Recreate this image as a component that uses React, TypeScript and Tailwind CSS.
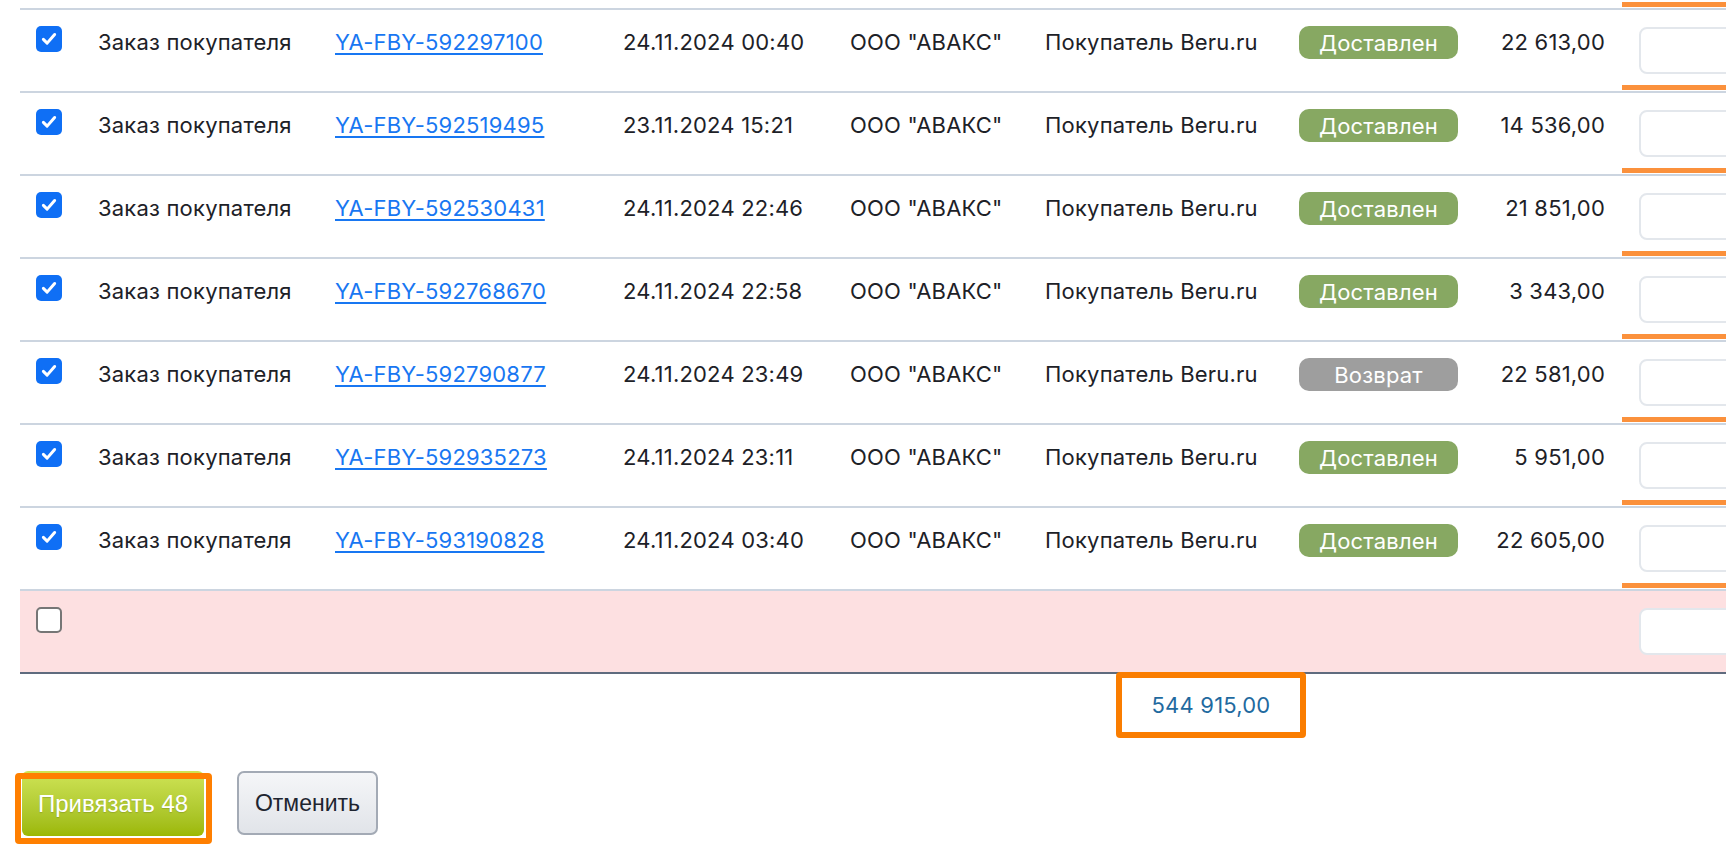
const rows = [
  { num: "YA-FBY-592297100", date: "24.11.2024 00:40", status: "Доставлен", sum: "22 613,00" },
  { num: "YA-FBY-592519495", date: "23.11.2024 15:21", status: "Доставлен", sum: "14 536,00" },
  { num: "YA-FBY-592530431", date: "24.11.2024 22:46", status: "Доставлен", sum: "21 851,00" },
  { num: "YA-FBY-592768670", date: "24.11.2024 22:58", status: "Доставлен", sum: "3 343,00" },
  { num: "YA-FBY-592790877", date: "24.11.2024 23:49", status: "Возврат", sum: "22 581,00" },
  { num: "YA-FBY-592935273", date: "24.11.2024 23:11", status: "Доставлен", sum: "5 951,00" },
  { num: "YA-FBY-593190828", date: "24.11.2024 03:40", status: "Доставлен", sum: "22 605,00" },
];

const grid = "grid grid-cols-[78px_237px_288px_227px_195px_254px_171px_152px_1fr]";

function Checkbox({ checked }: { checked: boolean }) {
  if (!checked) {
    return <div className="w-[26px] h-[26px] rounded-[5px] border-2 border-[#767676] bg-white" />;
  }
  return (
    <div className="w-[26px] h-[26px] rounded-[5px] bg-[#0f6ff5] flex items-center justify-center">
      <svg width="18" height="18" viewBox="0 0 24 24" fill="none">
        <path d="M4.5 12.5l5 5L19.5 6" stroke="white" strokeWidth="4" strokeLinecap="round" strokeLinejoin="round" />
      </svg>
    </div>
  );
}

function InputCell({ bar }: { bar: boolean }) {
  return (
    <div className="flex flex-col justify-between pt-[17px] pl-[17px] overflow-hidden">
      <div className="w-[240px] h-[47px] rounded-[8px] border-2 border-[#e3e7ec] bg-white shrink-0" />
      {bar ? <div className="-ml-[17px] h-[5px] mb-[1px] bg-[#fb913c]" /> : null}
    </div>
  );
}

export default function App() {
  return (
    <div className="w-[1726px] h-[852px] overflow-hidden bg-white text-[#1d2127] font-['Inter','Liberation_Sans',sans-serif] tracking-[0.2px]">
      <div className="ml-[20px]">
        <div className={`${grid} h-[8px]`}>
          <div className="col-start-9 pt-[2px]">
            <div className="h-[5px] bg-[#fb913c]" />
          </div>
        </div>

        {rows.map((r) => (
          <div key={r.num} className={`${grid} h-[83px] border-t-2 border-[#ccd5e0] text-[22px] leading-[26px]`}>
            <div className="pl-[16px] pt-[16px]">
              <Checkbox checked />
            </div>
            <div className="pt-[19px] whitespace-nowrap">Заказ покупателя</div>
            <div className="pt-[19px]">
              <a href="#" className="text-[#1877f2] underline underline-offset-[3px] whitespace-nowrap">{r.num}</a>
            </div>
            <div className="pt-[19px] whitespace-nowrap">{r.date}</div>
            <div className="pt-[19px] whitespace-nowrap">ООО "АВАКС"</div>
            <div className="pt-[19px] whitespace-nowrap">Покупатель Beru.ru</div>
            <div className="pt-[16px]">
              <div
                className={`w-[159px] h-[33px] rounded-[10px] flex items-center justify-center text-white ${
                  r.status === "Возврат" ? "bg-[#9e9e9e]" : "bg-[#87a862]"
                }`}
              >
                {r.status}
              </div>
            </div>
            <div className="pt-[19px] pr-[17px] text-right whitespace-nowrap">{r.sum}</div>
            <InputCell bar />
          </div>
        ))}

        <div className={`${grid} h-[85px] border-t-2 border-b-2 border-t-[#ccd5e0] border-b-[#5f6b7e] bg-[#fde0e1]`}>
          <div className="pl-[16px] pt-[16px]">
            <Checkbox checked={false} />
          </div>
          <div className="col-start-9">
            <InputCell bar={false} />
          </div>
        </div>
      </div>

      <div className="ml-[1116px] -mt-[2px] relative w-[190px] h-[66px] border-[6px] border-[#fa7d00] rounded-[4px] flex items-center justify-center text-[22px] text-[#1f6a9f]">
        544 915,00
      </div>

      <div className="flex items-start mt-[33px] font-['Liberation_Sans',Arial,sans-serif] text-[23px] tracking-normal">
        <div className="relative ml-[22px]">
          <button className="w-[182px] h-[65px] rounded-[6px] bg-gradient-to-b from-[#cfe455] to-[#9cb800] text-white text-[24px] [text-shadow:0_1px_1px_rgba(0,0,0,0.15)]">
            Привязать 48
          </button>
          <div className="absolute -left-[7px] top-[2px] w-[197px] h-[71px] border-[6px] border-[#ff7f00] rounded-[4px]" />
        </div>
        <button className="ml-[33px] w-[141px] h-[64px] rounded-[7px] border-2 border-[#a3aab5] bg-gradient-to-b from-[#f5f6f8] to-[#e1e4e9] text-[#1e2530]">
          Отменить
        </button>
      </div>
    </div>
  );
}
